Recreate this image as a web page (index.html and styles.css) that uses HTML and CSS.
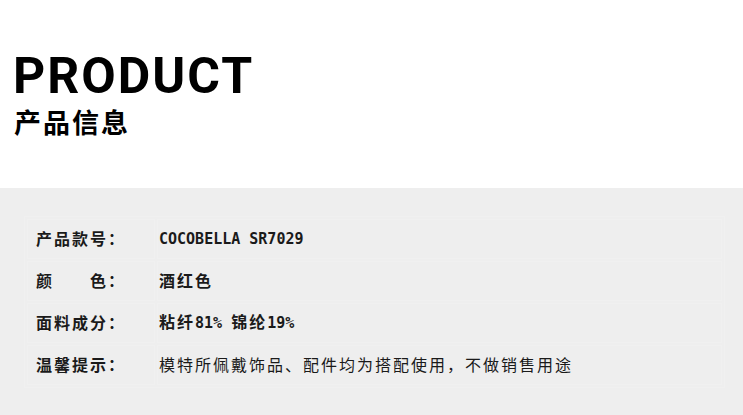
FILE: index.html
```html
<!DOCTYPE html>
<html lang="zh">
<head>
<meta charset="utf-8">
<link rel="stylesheet" href="styles.css">
</head>
<body>
<header class="head">
  <h1 class="title-en">PRODUCT</h1>
  <h2 class="title-cn">产品信息</h2>
</header>
<section class="info">
  <table class="spec">
    <tr>
      <td class="label">产品款号：</td>
      <td class="value"><span class="latin">COCOBELLA SR7029</span></td>
    </tr>
    <tr>
      <td class="label">颜&emsp;&emsp;色：</td>
      <td class="value">酒红色</td>
    </tr>
    <tr>
      <td class="label">面料成分：</td>
      <td class="value">粘纤<span class="latin">81% </span>锦纶<span class="latin">19%</span></td>
    </tr>
    <tr>
      <td class="label">温馨提示：</td>
      <td class="value plain">模特所佩戴饰品、配件均为搭配使用，不做销售用途</td>
    </tr>
  </table>
</section>
</body>
</html>
```
FILE: styles.css
```css
html, body {
  margin: 0;
  padding: 0;
  background: #ffffff;
  color: #111111;
}
.head {
  height: 188px;
  box-sizing: border-box;
  padding: 51px 0 0 13px;
}
.title-en {
  margin: 0;
  font-family: "Roboto", "Liberation Sans", sans-serif;
  font-weight: 700;
  font-size: 50px;
  line-height: 50px;
  letter-spacing: 2px;
  color: #000;
}
.title-cn {
  margin: 3px 0 0 1px;
  font-family: "Noto Sans CJK SC", sans-serif;
  font-weight: 700;
  font-size: 27px;
  line-height: 36px;
  letter-spacing: 2px;
  color: #000;
}
.info {
  background: #eeeeee;
  height: 227px;
  box-sizing: border-box;
  padding: 28px 0 0 24px;
}
.spec {
  width: 701px;
  border-collapse: separate;
  border-spacing: 2px;
  border: 1px solid #f0f0f0;
}
.spec td {
  border: 1px solid #f0f0f0;
  height: 40px;
  padding: 0 0 2px 8px;
  box-sizing: border-box;
  font-family: "Noto Sans CJK SC", sans-serif;
  font-size: 16px;
  line-height: 22px;
  letter-spacing: 2px;
  color: #1a1a1a;
  vertical-align: middle;
}
.spec td.label {
  width: 128px;
  font-weight: 700;
}
.spec td.value {
  font-weight: 700;
  padding-left: 1px;
}
.spec td.plain {
  font-weight: 400;
}
.latin {
  font-family: "DejaVu Sans Mono", monospace;
  font-size: 15px;
  letter-spacing: 0;
}
```
